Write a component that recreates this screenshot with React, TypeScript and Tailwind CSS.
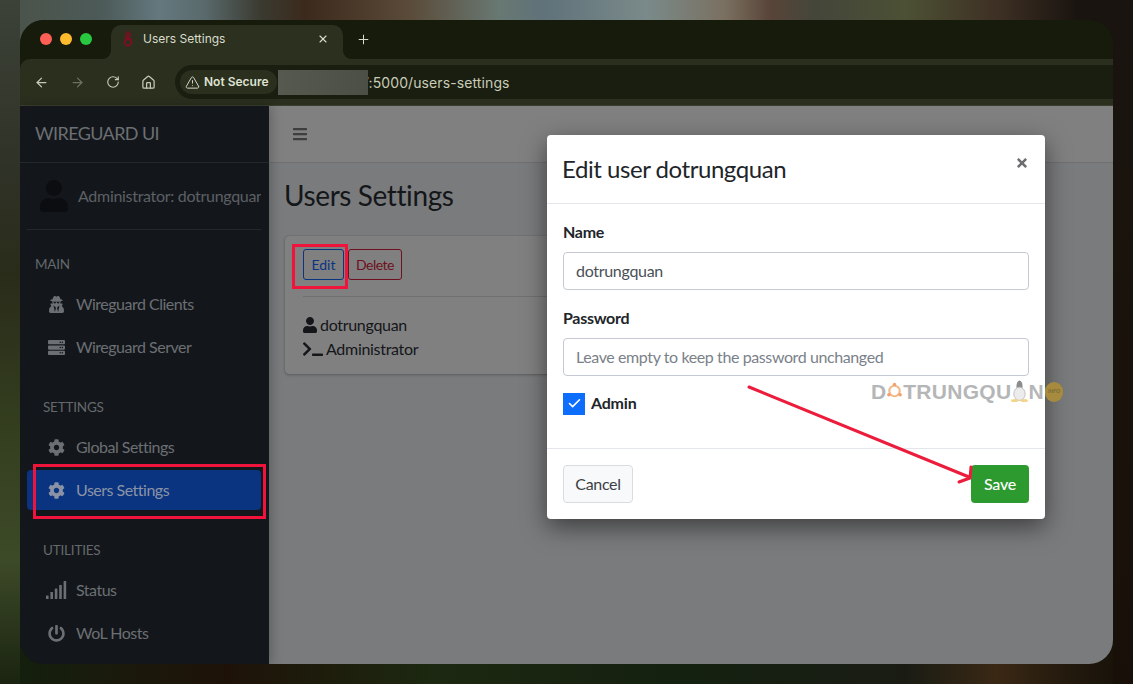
import React from "react";
import { ArrowLeft, ArrowRight, RotateCw, Home, TriangleAlert, X, Plus, Check } from "lucide-react";
import { FaUser, FaUserSecret, FaServer, FaCog, FaPowerOff, FaTerminal, FaTimes, FaBars } from "react-icons/fa";

const font = "font-['Lato','Liberation_Sans',sans-serif]";

function NavItem({ icon, label, active }: { icon: React.ReactNode; label: string; active?: boolean }) {
  return (
    <div className={`mx-[7px] h-10 w-[234px] flex items-center rounded-[4px] ${active ? "bg-[#0a3380] text-[#8a93a6]" : "text-[#6c6f73]"}`}>
      <div className="ml-[17px] w-[25px] mr-[7px] flex justify-center text-[17px]">{icon}</div>
      <span className="text-[16px] tracking-[-0.5px] whitespace-nowrap">{label}</span>
    </div>
  );
}

function Heading({ label, inset }: { label: string; inset: string }) {
  return <div className={`${inset} text-[13.5px] leading-[20px] tracking-[-0.2px] text-[#65686c]`}>{label}</div>;
}

function SignalBars() {
  return (
    <svg width="21" height="18" viewBox="0 0 21 18" fill="currentColor">
      <rect x="0" y="14.5" width="2.6" height="3.5" rx="0.5" />
      <rect x="4.4" y="11" width="2.6" height="7" rx="0.5" />
      <rect x="8.8" y="7.5" width="2.6" height="10.5" rx="0.5" />
      <rect x="13.2" y="4" width="2.6" height="14" rx="0.5" />
      <rect x="17.6" y="0" width="2.6" height="18" rx="0.5" />
    </svg>
  );
}

export default function App() {
  return (
    <div className={`${font} w-[1133px] h-[684px] overflow-hidden p-5 [background:linear-gradient(180deg,#3c4238_0,#2f3226_25%,#2a2c1a_40%,#34401f_65%,#3d4a28_82%,#1a2410_100%)_left/20px_100%_no-repeat,linear-gradient(180deg,#1a1410,#181008)_right/20px_100%_no-repeat,linear-gradient(90deg,#4a5248_0,#4c5a58_9%,#64787e_14%,#5a6a6c_18%,#3a3a30_23%,#3c2a1c_27%,#5a4a38_36%,#687872_44%,#60727a_48%,#7a8a8a_57%,#7a7060_64%,#584438_68%,#44463a_72%,#4c5034_80%,#3e3024_88%,#1a1410_95%,#1a1410_100%)_top/100%_44px_no-repeat,linear-gradient(90deg,#12200e_0,#1a1a0c_10%,#1e1208_20%,#1c2810_38%,#142010_62%,#1a1c14_80%,#3a2814_88%,#241a0e_94%,#141008_100%)_bottom/100%_44px_no-repeat]`}>
      <div className="relative w-[1093px] h-[644px] rounded-[24px] overflow-hidden flex flex-col bg-[#171b0c]">
        {/* tab strip */}
        <div className="h-[39px] shrink-0 flex items-end bg-[#171b0c]">
          <div className="w-[83px] h-full flex items-center gap-2 pl-5 pb-[1px]">
            <span className="w-3 h-3 rounded-full bg-[#fe5f57]" />
            <span className="w-3 h-3 rounded-full bg-[#febb2e]" />
            <span className="w-3 h-3 rounded-full bg-[#28c840]" />
          </div>
          <div className="w-2 h-2 bg-[radial-gradient(circle_at_0_0,transparent_7.5px,#2b301f_8px)]" />
          <div className="w-[232px] h-[34px] rounded-t-[10px] bg-[#2b301f] flex items-center pl-[10px] pr-[14px] pb-[6px] text-[#d9dccb] font-['Inter',sans-serif]">
            <svg width="14" height="18" viewBox="0 0 14 18" className="shrink-0">
              <circle cx="7" cy="5" r="2" fill="none" stroke="#7a1020" strokeWidth="1.8" />
              <circle cx="7" cy="12.5" r="3.2" fill="none" stroke="#7a1020" strokeWidth="2" />
              <path d="M3 7.5 L11 9 M7 1 V3" stroke="#7a1020" strokeWidth="1.6" />
            </svg>
            <span className="ml-[8px] text-[12px] flex-1">Users Settings</span>
            <X size={12} strokeWidth={2.2} />
          </div>
          <div className="w-2 h-2 bg-[radial-gradient(circle_at_100%_0,transparent_7.5px,#2b301f_8px)]" />
          <div className="w-6 h-[34px] flex items-center justify-center pb-[6px] text-[#d9dccb]"><Plus size={15} strokeWidth={1.6} /></div>
        </div>

        {/* toolbar */}
        <div className="h-[47px] shrink-0 rounded-tl-[10px] bg-[#2a2f1e] border-b border-[#3a3f30] flex items-start pt-[6px]">
          <div className="w-[155px] h-[34px] flex items-center text-[#c5cab4]">
            <ArrowLeft size={15} className="ml-[14px]" />
            <ArrowRight size={15} className="ml-[21px] text-[#6d7260]" />
            <RotateCw size={14} className="ml-[21px]" />
            <Home size={15} className="ml-[21px]" />
          </div>
          <div className="flex-1 h-[34px] rounded-l-[17px] bg-[#1a1e10] flex items-center pl-[5px] font-['Inter',sans-serif] overflow-hidden">
            <div className="h-[24px] w-[97px] shrink-0 rounded-[12px] bg-[#2a2f1e] flex items-center pl-[5px] text-[#dfe2d2]">
              <TriangleAlert size={15} strokeWidth={1.5} />
              <span className="ml-[4px] text-[12px] font-semibold whitespace-nowrap">Not Secure</span>
            </div>
            <div className="relative z-10 ml-[1px] h-[25px] w-[90px] shrink-0 bg-[linear-gradient(90deg,#55594f,#4b4f45)]" />
            <span className="-ml-[7px] text-[14px] tracking-[0.1px] text-[#c8ccb8] whitespace-nowrap">7:5000/users-settings</span>
          </div>
        </div>

        {/* page */}
        <div className="relative flex-1 flex min-h-0">
          {/* sidebar */}
          <aside className="relative z-10 w-[249px] shrink-0 bg-[#13171b] shadow-[3px_0_10px_rgba(0,0,0,.22)] flex flex-col">
            <div className="h-[57px] shrink-0 border-b border-[#24282c] pl-[15px] pb-[2px] flex items-center text-[18px] tracking-[-0.6px] text-[#6c6f73]">WIREGUARD UI</div>
            <div className="mx-[7px] w-[234px] h-[67px] shrink-0 border-b border-[#24282c] flex items-center overflow-hidden">
              <FaUser className="ml-[13px] w-[28px] h-[32px] shrink-0 text-[#0b0d10]" />
              <span className="ml-[10px] text-[16px] tracking-[-0.3px] text-[#5d6065] whitespace-nowrap">Administrator: dotrungquan</span>
            </div>
            <Heading label="MAIN" inset="pl-[15px] mt-[24px]" />
            <div className="mt-[10px] flex flex-col gap-[3px]">
              <NavItem icon={<FaUserSecret />} label="Wireguard Clients" />
              <NavItem icon={<FaServer />} label="Wireguard Server" />
            </div>
            <Heading label="SETTINGS" inset="pl-[23px] mt-[30px]" />
            <div className="mt-[10px] flex flex-col gap-[3px]">
              <NavItem icon={<FaCog />} label="Global Settings" />
              <NavItem icon={<FaCog />} label="Users Settings" active />
            </div>
            <Heading label="UTILITIES" inset="pl-[23px] mt-[30px]" />
            <div className="mt-[10px] flex flex-col gap-[3px]">
              <NavItem icon={<SignalBars />} label="Status" />
              <NavItem icon={<FaPowerOff />} label="WoL Hosts" />
            </div>
          </aside>

          {/* main */}
          <main className="flex-1 bg-[#7a7b7c] flex flex-col min-w-0">
            <div className="h-[57px] shrink-0 bg-[#808080] border-b border-[#6f7071] pl-[24px] flex items-center">
              <FaBars className="w-[14px] h-[16px] text-[#3e3e3e]" />
            </div>
            <div className="px-4">
              <h1 className="-ml-px mt-[12px] text-[28px] leading-[40px] tracking-[-0.4px] text-[#14161a]">Users Settings</h1>
              <div className="mt-[21px] w-[400px] h-[138px] rounded-[4px] bg-[#808080] shadow-[0_0_1px_rgba(0,0,0,.3),0_1px_3px_rgba(0,0,0,.25)] px-[18px] pt-[13px]">
                <div className="flex gap-[4px] h-[31px]">
                  <div className="w-[41px] rounded-[3px] border border-[#0a3380] text-[#0a3380] text-[14px] flex items-center justify-center">Edit</div>
                  <div className="w-[54px] rounded-[3px] border border-[#6e1020] text-[#6e1020] text-[14px] tracking-[-0.5px] flex items-center justify-center">Delete</div>
                </div>
                <div className="mt-[16px] border-t border-[#6f7071]" />
                <div className="mt-[16px] text-[16px] leading-[24px] tracking-[-0.3px] text-[#14161a]">
                  <div className="flex items-center"><FaUser className="w-[14px] h-[16px] mr-[3px]" />dotrungquan</div>
                  <div className="flex items-center"><FaTerminal className="w-[20px] h-[16px] mr-[3px]" />Administrator</div>
                </div>
              </div>
            </div>
          </main>

          {/* modal */}
          <div className="absolute z-20 left-[527px] top-[29px] w-[498px] h-[384px] rounded-[4px] bg-white shadow-[0_8px_24px_rgba(0,0,0,.5)] flex flex-col text-[#212529]">
            <div className="h-[69px] shrink-0 border-b border-[#e3e6ea] pl-4 pr-4 flex items-center justify-between">
              <h2 className="-ml-px text-[24px] tracking-[-0.45px]">Edit user dotrungquan</h2>
              <FaTimes className="w-[12px] h-[14px] -mt-[12px] mr-[1px] text-[#6d6f72]" />
            </div>
            <div className="flex-1 px-4 flex flex-col">
              <label className="mt-[16px] text-[16px] leading-[24px] font-bold tracking-[-0.3px]">Name</label>
              <div className="mt-[8px] h-[38px] rounded-[4px] border border-[#c4c9d3] px-3 flex items-center text-[16px] tracking-[-0.3px] text-[#495057]">dotrungquan</div>
              <label className="mt-[16px] text-[16px] leading-[24px] font-bold tracking-[-0.3px]">Password</label>
              <div className="mt-[8px] h-[38px] rounded-[4px] border border-[#c4c9d3] px-3 flex items-center text-[16px] tracking-[-0.4px] text-[#7a8189]">Leave empty to keep the password unchanged</div>
              <div className="mt-[16px] flex items-center">
                <div className="w-[22px] h-[22px] bg-[#0d6efd] flex items-center justify-center text-white"><Check size={15} strokeWidth={2.6} /></div>
                <span className="ml-[6px] -mt-[1px] text-[16px] font-bold tracking-[-0.2px]">Admin</span>
              </div>
            </div>
            <div className="h-[71px] shrink-0 border-t border-[#e3e6ea] px-4 pt-4 flex justify-between">
              <div className="w-[70px] h-[38px] rounded-[4px] border border-[#d9dce0] bg-[#f8f9fa] flex items-center justify-center text-[16px] tracking-[-0.3px] text-[#3a3f44]">Cancel</div>
              <div className="w-[58px] h-[38px] rounded-[4px] bg-[#2d9a2f] flex items-center justify-center text-[16px] tracking-[-0.2px] text-white font-medium">Save</div>
            </div>
          </div>

          {/* watermark */}
          <div className="absolute z-30 left-[851px] top-[273px] flex items-center h-[24px] font-['Liberation_Sans',sans-serif] font-bold text-[21px] leading-none text-[#b5b6b8]">
            <span>D</span>
            <svg width="17" height="20" viewBox="0 0 18 20">
              <circle cx="9" cy="10" r="5.5" fill="none" stroke="#f2b98a" strokeWidth="2.2" />
              <circle cx="9" cy="3" r="1.8" fill="#f0a070" /><circle cx="3" cy="14" r="1.8" fill="#f0a070" /><circle cx="15" cy="14" r="1.8" fill="#f0a070" />
            </svg>
            <span className="tracking-[0.3px]">TRUNGQU</span>
            <svg width="17" height="24" viewBox="0 0 18 24">
              <ellipse cx="9" cy="7" rx="3.2" ry="6" fill="#8c8c8c" />
              <ellipse cx="9" cy="15" rx="6" ry="7" fill="#ececec" stroke="#bdbdbd" />
              <ellipse cx="4" cy="22" rx="4" ry="1.6" fill="#f4d488" /><ellipse cx="14" cy="22" rx="4" ry="1.6" fill="#f4d488" />
            </svg>
            <span>N</span>
          </div>
          <div className="absolute z-30 left-[1025px] top-[276px] w-[18px] h-[20px] rounded-full bg-[#a68a3d] flex items-center justify-center text-[5px] font-bold text-[#7a6a3a]">INFO</div>

          {/* annotations */}
          <div className="absolute z-30 left-[272px] top-[138px] w-[56px] h-[45px] border-[3px] border-[#f0143c]" />
          <div className="absolute z-30 left-[13px] top-[358px] w-[233px] h-[55px] border-[3px] border-[#f0143c]" />
          <svg className="absolute z-30 left-[720px] top-[270px]" width="240" height="110" viewBox="0 0 240 110" fill="none">
            <path d="M9 11 L229 101" stroke="#ec1c3c" strokeWidth="3" strokeLinecap="round" />
            <path d="M219 106 L230 102 L231 91" stroke="#ec1c3c" strokeWidth="3" strokeLinecap="round" strokeLinejoin="round" />
          </svg>
        </div>
      </div>
    </div>
  );
}
